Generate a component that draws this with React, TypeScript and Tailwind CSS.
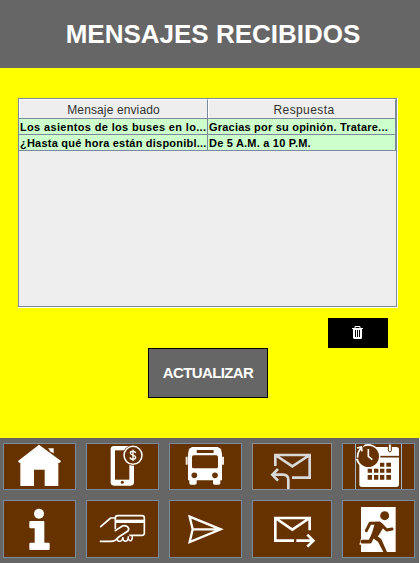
import type { ReactNode } from "react";

type TileProps = { label: string; viewBox: string; className: string; children: ReactNode };

function Tile({ label, viewBox, className, children }: TileProps) {
  return (
    <button
      type="button"
      aria-label={label}
      className={`block shrink-0 bg-[#663300] outline outline-1 -outline-offset-1 ${className}`}
    >
      <svg viewBox={viewBox} className="block h-full w-full" fill="none">
        {children}
      </svg>
    </button>
  );
}

const rows = [
  { sent: "Los asientos de los buses en lo...", answer: "Gracias por su opinión. Tratare...", spacing: "tracking-[0.34px]" },
  { sent: "¿Hasta qué hora están disponibl...", answer: "De 5 A.M. a 10 P.M.", spacing: "tracking-[0.22px]" },
];

function MessageTable() {
  return (
    <div className="ml-[18px] h-[210px] w-[380px] border-r border-b border-white">
      <div className="h-[209px] w-[379px] border border-[#7a8a99] bg-[#eeeeee]">
        <div className="flex h-5 border-b border-[#7a8a99] text-[12px] leading-[20px] text-[#333333]">
          <div className="w-[189px] border-r border-r-[#7a8a99] border-t border-l border-t-white border-l-white text-center">
            <span className="inline-block tracking-[0.12px]">Mensaje enviado</span>
          </div>
          <div className="w-[188px] border-r border-r-[#7a8a99] border-t border-l border-t-white border-l-white pl-1 text-center">
            <span className="inline-block tracking-[0.4px]">Respuesta</span>
          </div>
        </div>
        {rows.map(({ sent, answer, spacing }) => (
          <div
            key={sent}
            className="flex h-4 border-b border-[#7a8a99] bg-[#ccffcc] text-[11px] leading-[17px] font-bold whitespace-nowrap text-black"
          >
            <div className={`w-[189px] border-r border-[#7a8a99] pl-px ${spacing}`}>{sent}</div>
            <div className="w-[188px] border-r border-[#7a8a99] pl-px tracking-[0.21px]">{answer}</div>
          </div>
        ))}
      </div>
    </div>
  );
}

export default function App() {
  return (
    <div className="flex h-[563px] w-[420px] flex-col overflow-hidden bg-[#ffff00] font-['Liberation_Sans',Arial,sans-serif]">
      <header className="flex h-[68px] shrink-0 justify-center bg-[#666666] pt-4 pl-[6px]">
        <h1 className="text-[26px] leading-9 font-bold whitespace-nowrap text-white">MENSAJES RECIBIDOS</h1>
      </header>

      <main className="h-[370px] shrink-0 pt-[30px]">
        <MessageTable />
        <div className="mt-[10px] flex h-[30px] pl-[328px]">
          <button type="button" aria-label="Eliminar" className="h-[30px] w-[60px] bg-black">
            <svg viewBox="0 0 60 30" className="block h-full w-full">
              <path d="M27 10V8.5H32V10" fill="none" stroke="white" />
              <path d="M24 10H35V11H34V20L33 21H26L25 20V11H24Z" fill="white" />
              <path d="M27.5 12V19M29.5 12V19M31.5 12V19" stroke="black" />
            </svg>
          </button>
        </div>
        <button
          type="button"
          className="ml-[148px] block h-[50px] w-[120px] border border-black bg-[#666666] pt-px text-center text-[15px] font-bold tracking-[-0.6px] text-white"
        >
          ACTUALIZAR
        </button>
      </main>

      <footer className="flex h-[125px] shrink-0 flex-col gap-[10px] border-r border-[#f0f0f0] bg-[#666666] pt-[5px] pl-[3px]">
        <div className="flex gap-[10px]">
          <Tile label="Inicio" viewBox="9 39 219 141" className="h-[47px] w-[73px] outline-[#7a8a99]">
            <path d="M117 44L54 93L57 98H61V168H102V119H134V168H175V98H180L183 93L117 44Z" fill="white" />
            <path d="M144 55H161V71L157 67V59H149Z" fill="white" />
            <path d="M146 58H159V67H153Z" fill="white" />
          </Tile>
          <Tile label="Pago móvil" viewBox="18 39 219 141" className="h-[47px] w-[73px] outline-[#7a8a99]">
            <rect x="92" y="48" width="70" height="119" rx="10" fill="white" />
            <path d="M105 61H148V149H105Z" fill="#663300" />
            <circle cx="127" cy="157" r="4.5" fill="#663300" />
            <circle cx="159" cy="76" r="31" fill="#663300" />
            <circle cx="159" cy="76" r="27" stroke="white" strokeWidth="4.5" />
            <path d="M167 69C165 62 151 62 151 69C151 77 167 74 167 82C167 90 151 90 150 82M159 59V93" stroke="white" strokeWidth="4" />
          </Tile>
          <Tile label="Buses" viewBox="18 39 219 141" className="h-[47px] w-[73px] outline-[#7a8a99]">
            <path d="M87 51H164L174 57L177 72V151H172V160Q172 164 167 164H155Q150 164 150 160V151H101V160Q101 164 96 164H83Q79 164 79 160V151H75V72L78 57Z" fill="white" />
            <path d="M68 80H74V104H68ZM177 80H183V104H177Z" fill="#f0e9e3" />
            <rect x="101" y="60" width="51" height="9" rx="2" fill="#663300" />
            <rect x="87" y="76" width="78" height="39" rx="5" fill="#663300" />
            <circle cx="94" cy="136" r="8.5" fill="#663300" />
            <circle cx="156" cy="136" r="8.5" fill="#663300" />
          </Tile>
          <Tile label="Mensajes recibidos" viewBox="18 39 240 141" className="h-[47px] w-20 outline-[#8e8e8e]">
            <path d="M88 108V75H191V143H138M88 75L139 109L191 75" stroke="#d9d9d9" strokeWidth="8" />
            <path d="M127 177V150Q127 134 111 134H79M96 117L79 134L96 152" stroke="#d9d9d9" strokeWidth="8" />
          </Tile>
          <Tile label="Horarios" viewBox="21 39 219 141" className="h-[47px] w-[73px] outline-[#7a8a99]">
            <rect x="73" y="51" width="119" height="120" rx="8" fill="white" />
            <path d="M132 80H192" stroke="#663300" strokeWidth="5" />
            <path d="M160 42H169V60Q169 66 164.500 66Q160 66 160 60Z" fill="white" stroke="#663300" strokeWidth="3" />
            <circle cx="99" cy="79" r="37" fill="white" />
            <circle cx="100" cy="79" r="32" fill="#663300" />
            <path d="M62 42H90L83 52Q70 63 70 86H62Z" fill="#663300" />
            <path d="M68 83Q67 66 79 53M66 54L79 51L81 64" stroke="white" strokeWidth="5" />
            <path d="M100 57V79L112 89" stroke="white" strokeWidth="5" />
            <path d="M135 98H148V110H135ZM154 98H168V110H154ZM98 116H111V128H98ZM117 116H130V128H117ZM135 116H148V128H135ZM154 116H168V128H154ZM98 135H111V149H98ZM117 135H130V149H117ZM135 135H148V149H135ZM154 135H168V149H154Z" fill="#663300" />
            <path d="M61.500 42V177M199.500 42V177" stroke="#a3b8cc" strokeWidth="3" />
          </Tile>
        </div>

        <div className="flex gap-[10px]">
          <Tile label="Información" viewBox="9 210 219 174" className="h-[58px] w-[73px] outline-[#7a8a99]">
            <circle cx="117" cy="251" r="15" fill="white" />
            <path d="M91 273H130Q133 273 133 276V338H146Q149 338 149 341V357Q149 360 146 360H91Q88 360 88 357V341Q88 338 91 338H104V295H91Q88 295 88 292V276Q88 273 91 273Z" fill="white" />
          </Tile>
          <Tile label="Tarjeta" viewBox="18 210 219 174" className="h-[58px] w-[73px] outline-[#7a8a99]">
            <path d="M106 298V264Q106 257 113 257H186Q193 257 193 264V309Q193 316 186 316H148" stroke="white" strokeWidth="5" />
            <path d="M106 269H193V279H106Z" fill="white" />
            <path d="M62 290L92 264H103M106 302L127 288Q135 285 142 290Q149 296 144 303L116 321Q108 334 92 334H61" stroke="white" strokeWidth="5" strokeLinecap="round" strokeLinejoin="round" />
            <path d="M111 323Q111 334 119 334Q127 334 129 321M129 325Q129 334 137 334Q145 333 145 319M145 327Q149 335 154 331Q158 327 157 318" stroke="white" strokeWidth="4.5" />
          </Tile>
          <Tile label="Enviar" viewBox="18 210 219 174" className="h-[58px] w-[73px] outline-[#7a8a99]">
            <path d="M80 260L173 298L80 336L89 298ZM89 298H173" stroke="white" strokeWidth="7" />
          </Tile>
          <Tile label="Mensajes enviados" viewBox="18 210 240 174" className="h-[58px] w-20 outline-[#7a8a99]">
            <path d="M144 332H88V264H191V301M88 264L139 299L191 264" stroke="white" strokeWidth="8" />
            <path d="M151 332H202M184 314L202 332L184 350" stroke="white" strokeWidth="8" />
          </Tile>
          <Tile label="Salir" viewBox="21 210 219 174" className="h-[58px] w-[73px] outline-[#7a8a99]">
            <path d="M78 231H182V366H78Z" fill="white" />
            <path d="M76 344L80 329H102L112 315" stroke="white" strokeWidth="6" />
            <path d="M116 312L105 335H82" stroke="#663300" strokeWidth="11" strokeLinecap="round" strokeLinejoin="round" />
            <circle cx="149" cy="257" r="13.500" fill="#663300" />
            <path d="M94 302L105 280H134" stroke="#663300" strokeWidth="9" strokeLinecap="round" strokeLinejoin="round" />
            <path d="M121 275H136L148 288L132 314L126 322L109 316Z" fill="#663300" />
            <path d="M138 283L155 300L171 297" stroke="#663300" strokeWidth="9" strokeLinecap="round" strokeLinejoin="round" />
            <path d="M119 311L139 328L156 366H145L129 335L110 322Z" fill="#663300" />
          </Tile>
        </div>
      </footer>
    </div>
  );
}
